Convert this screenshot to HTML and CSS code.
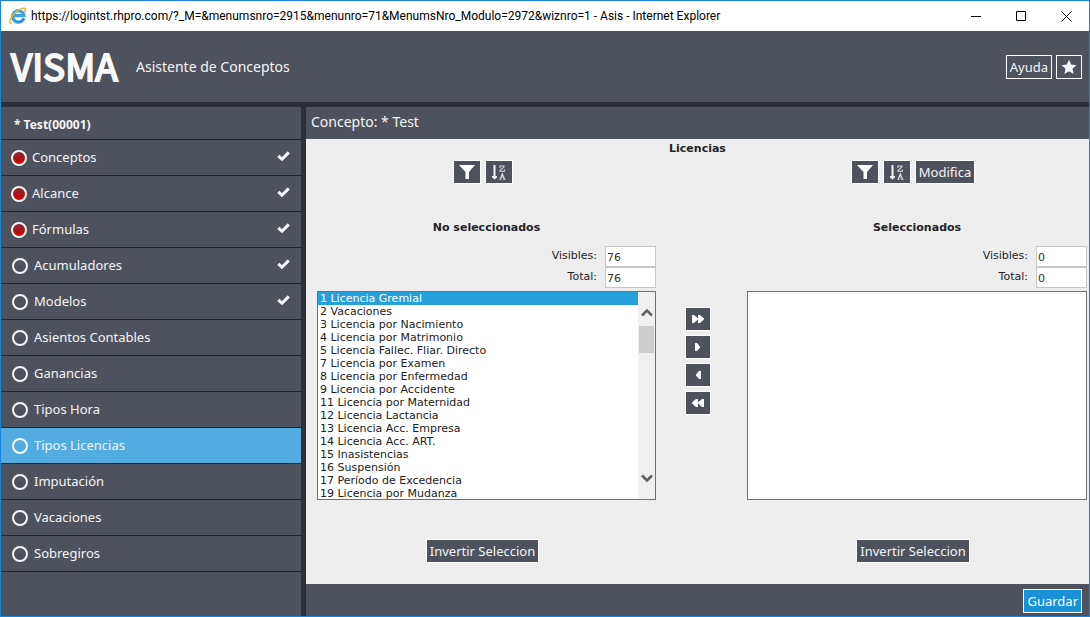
FILE: index.html
```html
<!DOCTYPE html>
<html lang="es">
<head>
<meta charset="utf-8">
<title>Asis - Internet Explorer</title>
<link rel="stylesheet" href="styles.css">
</head>
<body>
<svg class="defs" aria-hidden="true">
  <symbol id="check" viewBox="0 0 13 10"><path d="M1.3 4.8 5 8.2 11.8 1.4" fill="none" stroke="#f5f6fa" stroke-width="3"/></symbol>
  <symbol id="filter" viewBox="0 0 16 14"><path d="M0 0h16L10 7v7H6.500V7z" fill="#fff"/></symbol>
  <symbol id="sort" viewBox="0 0 14 15"><path d="M2.500 0v11" stroke="#f4f4f4" stroke-width="2"/><path d="M0 11h5v1.500L2.500 14.500 0 12.500z" fill="#f4f4f4"/><path d="M8 3V1h4v.8L8 5.400V6.200h4.300V4.500M7.500 14.200h2M11 14.200h2.500M8.300 14 10.300 8.800 12.500 14M9 12.300h3" fill="none" stroke="#dcdde0" stroke-width="1.100"/></symbol>
  <symbol id="next" viewBox="0 0 12 8"><path d="M3 0h2l3 3.500v1L5 8H3z" fill="#fff"/></symbol>
  <symbol id="last" viewBox="0 0 12 8"><path d="M0 0h2l4 3.500V0h2l4 3.500v1L8 8H6V4.500L2 8H0z" fill="#fff"/></symbol>
</svg>
<div class="window">
  <header class="titlebar">
    <svg class="ie" viewBox="0 0 18 18" aria-hidden="true">
      <path d="M14.800 11.200A5.700 5.700 0 1 1 15 8.600H5" fill="none" stroke="#3ba3e0" stroke-width="3.200"/>
      <path d="M14.800 11.200A5.700 5.700 0 0 1 5 12.600" fill="none" stroke="#1b7fca" stroke-width="1"/>
      <path d="M2.600 16.600C-1 16 1.500 9 7.500 4.500 11 1.500 16.200-.2 16.400 2.600c.1 1-.4 2-.9 2.800" fill="none" stroke="#f0b323" stroke-width="1.500"/>
    </svg>
    <span class="titletext">https://logintst.rhpro.com/?_M=&amp;menumsnro=2915&amp;menunro=71&amp;MenumsNro_Modulo=2972&amp;wiznro=1 - Asis - Internet Explorer</span>
    <button class="winbtn" aria-label="Minimizar"><svg viewBox="0 0 11 11"><path d="M0 5.500h10" stroke="#000"/></svg></button>
    <button class="winbtn" aria-label="Maximizar"><svg viewBox="0 0 11 11"><path d="M.5.5h9v9h-9z" fill="none" stroke="#000"/></svg></button>
    <button class="winbtn" aria-label="Cerrar"><svg viewBox="0 0 11 11"><path d="M.5.500l10 10M10.500.5l-10 10" stroke="#000"/></svg></button>
  </header>
  <div class="banner">
    <span class="logo">VISMA</span>
    <h1 class="apptitle">Asistente de Conceptos</h1>
    <button class="btn ghost">Ayuda</button>
    <button class="btn ghost star" aria-label="Favorito"><svg viewBox="0 0 16 16"><path d="M8 .8l2.200 4.800 5.200.6-3.900 3.500 1.100 5.200L8 12.300l-4.600 2.600 1.100-5.200L.6 6.200l5.200-.6z" fill="#f6f6f6"/></svg></button>
  </div>
  <div class="body">
    <nav class="sidebar">
      <h2 class="sidetitle">* Test(00001)</h2>
      <a class="item done" href="#"><i class="dot"></i><span>Conceptos</span><svg class="tick"><use href="#check"/></svg></a>
      <a class="item done" href="#"><i class="dot"></i><span>Alcance</span><svg class="tick"><use href="#check"/></svg></a>
      <a class="item done" href="#"><i class="dot"></i><span>Fórmulas</span><svg class="tick"><use href="#check"/></svg></a>
      <a class="item" href="#"><i class="dot"></i><span>Acumuladores</span><svg class="tick"><use href="#check"/></svg></a>
      <a class="item" href="#"><i class="dot"></i><span>Modelos</span><svg class="tick"><use href="#check"/></svg></a>
      <a class="item" href="#"><i class="dot"></i><span>Asientos Contables</span></a>
      <a class="item" href="#"><i class="dot"></i><span>Ganancias</span></a>
      <a class="item" href="#"><i class="dot"></i><span>Tipos Hora</span></a>
      <a class="item active" href="#"><i class="dot"></i><span>Tipos Licencias</span></a>
      <a class="item" href="#"><i class="dot"></i><span>Imputación</span></a>
      <a class="item" href="#"><i class="dot"></i><span>Vacaciones</span></a>
      <a class="item" href="#"><i class="dot"></i><span>Sobregiros</span></a>
    </nav>
    <main class="main">
      <h2 class="maintitle">Concepto: * Test</h2>
      <section class="content">
        <h3 class="heading">Licencias</h3>
        <div class="picker">
          <div class="side">
            <div class="tools">
              <button class="btn icon" aria-label="Filtrar"><svg class="i-filter"><use href="#filter"/></svg></button>
              <button class="btn icon" aria-label="Ordenar"><svg class="i-sort"><use href="#sort"/></svg></button>
            </div>
            <h3 class="heading">No seleccionados</h3>
            <div class="counts">
              <label for="v1">Visibles:</label><input id="v1" value="76">
              <label for="t1">Total:</label><input id="t1" value="76">
            </div>
            <div class="listbox">
              <select class="list" size="16" aria-label="No seleccionados">
                <option selected>1 Licencia Gremial</option>
                <option>2 Vacaciones</option>
                <option>3 Licencia por Nacimiento</option>
                <option>4 Licencia por Matrimonio</option>
                <option>5 Licencia Fallec. Fliar. Directo</option>
                <option>7 Licencia por Examen</option>
                <option>8 Licencia por Enfermedad</option>
                <option>9 Licencia por Accidente</option>
                <option>11 Licencia por Maternidad</option>
                <option>12 Licencia Lactancia</option>
                <option>13 Licencia Acc. Empresa</option>
                <option>14 Licencia Acc. ART.</option>
                <option>15 Inasistencias</option>
                <option>16 Suspensión</option>
                <option>17 Período de Excedencia</option>
                <option>19 Licencia por Mudanza</option>
              </select>
              <div class="scroll" aria-hidden="true">
                <svg class="arrow" viewBox="0 0 12 9"><path d="M1 7.500l5-5 5 5" fill="none" stroke="#606060" stroke-width="2.500"/></svg>
                <div class="thumb"></div>
                <svg class="arrow" viewBox="0 0 12 9"><path d="M1 1.500l5 5 5-5" fill="none" stroke="#606060" stroke-width="2.500"/></svg>
              </div>
            </div>
            <div class="foot"><button class="btn">Invertir Seleccion</button></div>
          </div>
          <div class="movers">
            <button class="btn move" aria-label="Agregar todos"><svg><use href="#last"/></svg></button>
            <button class="btn move" aria-label="Agregar"><svg><use href="#next"/></svg></button>
            <button class="btn move back" aria-label="Quitar"><svg><use href="#next"/></svg></button>
            <button class="btn move back" aria-label="Quitar todos"><svg><use href="#last"/></svg></button>
          </div>
          <div class="side">
            <div class="tools">
              <button class="btn icon" aria-label="Filtrar"><svg class="i-filter"><use href="#filter"/></svg></button>
              <button class="btn icon" aria-label="Ordenar"><svg class="i-sort"><use href="#sort"/></svg></button>
              <button class="btn">Modifica</button>
            </div>
            <h3 class="heading">Seleccionados</h3>
            <div class="counts">
              <label for="v2">Visibles:</label><input id="v2" value="0">
              <label for="t2">Total:</label><input id="t2" value="0">
            </div>
            <div class="listbox"><select class="list" size="16" aria-label="Seleccionados"></select></div>
            <div class="foot"><button class="btn">Invertir Seleccion</button></div>
          </div>
        </div>
      </section>
      <footer class="actions"><button class="btn primary">Guardar</button></footer>
    </main>
  </div>
</div>
</body>
</html>
```
FILE: styles.css
```css
* { box-sizing: border-box; }
body { margin: 0; font-family: "Noto Sans", "Open Sans", sans-serif; color: #222328; }
h1, h2, h3 { margin: 0; font-weight: 400; }
button, input, select { font: inherit; margin: 0; }
svg { display: block; flex: none; }
.defs { display: none; }

.window { min-height: 100vh; display: flex; flex-direction: column; border: 1px solid #1883d7; background: #4e525d; }

.titlebar { display: flex; align-items: center; height: 30px; padding-left: 8px; background: #fff; color: #000; font-family: Roboto, sans-serif; font-size: 12px; }
.ie { width: 18px; height: 18px; margin-right: 4px; }
.titletext { flex: 1; white-space: nowrap; }
.winbtn { width: 45px; height: 28px; padding: 0; border: 0; background: none; display: grid; place-items: center; }
.winbtn svg { width: 11px; height: 11px; }

.banner { display: flex; align-items: center; height: 76px; padding: 0 7px 0 10px; border-bottom: 5px solid #2b2e36; color: #f5f5f5; }
.logo { width: 125px; padding-bottom: 3px; font-family: "Noto Sans CJK JP", sans-serif; font-weight: 400; font-size: 37px; line-height: 40px; color: #f8f8f8; -webkit-text-stroke: 2px #f8f8f8; }
.apptitle { flex: 1; font-size: 14px; }

.btn { height: 24px; padding: 0 3px; border: 1px solid #fff; background: #4e525d; color: #f5f5f5; font-family: "Noto Sans", "Open Sans", sans-serif; font-size: 13px; line-height: 18px; white-space: nowrap; display: grid; place-items: center; }
.ghost { margin-left: 4px; }
.star { width: 26px; padding: 0; }
.star svg { width: 16px; height: 16px; }

.body { flex: 1; display: flex; }
.sidebar { width: 305px; border-right: 5px solid #2b2f36; color: #f5f5f5; font-size: 13px; }
.sidetitle { height: 33px; padding: 2px 13px 0; border-bottom: 1px solid #23252b; font-size: 12px; font-weight: 700; line-height: 31px; }
.item { display: flex; align-items: center; height: 36px; padding: 0 11px; border-bottom: 1px solid #23252b; color: inherit; text-decoration: none; }
.item span { flex: 1; padding-bottom: 2px; }
.dot { width: 16px; height: 16px; margin: 1px 6px 0 0; border: 2px solid #f5f5f5; border-radius: 50%; background: linear-gradient(#50555f, #4b4f59); }
.done { padding-left: 10px; }
.done .dot { margin-right: 5px; background: linear-gradient(#80282c, #d40000); }
.item.done { padding-right: 11px; }
.active { background: #52ace0; }
.active .dot { background: none; }
.tick { width: 13px; height: 10px; margin-bottom: 3px; }

.main { flex: 1; display: flex; flex-direction: column; }
.maintitle { height: 32px; padding-left: 5px; font-size: 14px; line-height: 30px; color: #f5f5f5; }
.content { flex: 1; background: #eee; padding-top: 1px; font-family: "DejaVu Sans", sans-serif; font-size: 11px; }
.heading { font-size: 11px; font-weight: 700; line-height: 18px; text-align: center; }
.picker { display: grid; grid-template-columns: 339fr 91px 340fr; padding: 2px 2px 0 11px; }
.tools, .foot { display: flex; justify-content: center; gap: 4px; padding-right: 8px; }
.tools { margin-bottom: 35px; }
.icon { width: 28px; padding: 0; }
.i-filter { width: 16px; height: 14px; }
.i-sort { width: 14px; height: 15px; }
.counts { display: grid; grid-template-columns: 1fr 51px; column-gap: 8px; margin: 9px 0 3px; text-align: right; }
.counts label { line-height: 20px; }
.counts input { width: 51px; height: 21px; padding: 1px 0 0 1px; border: 1px solid #c8c8c8; background: #fff; color: #333; }
.listbox { display: flex; height: 209px; border: 1px solid #707070; background: #fff; }
.list { flex: 1; min-width: 0; height: 207px; padding: 0; border: 0; border-radius: 0; outline: 0; overflow: hidden; background: #fff; color: #222; }
.list option { height: 13px; min-height: 13px; padding: 0 2px; line-height: 13px; }
.list option:checked { background: #26a0da linear-gradient(#26a0da, #26a0da); color: #fff; }
.scroll { width: 17px; padding: 16px 0 16px; display: flex; flex-direction: column; align-items: center; background: #f0f0f0; }
.arrow { width: 12px; height: 9px; }
.thumb { width: 15px; height: 27px; margin: 9px 0 auto; background: #cdcdcd; }
.foot { margin-top: 39px; }
.movers { display: flex; flex-direction: column; align-items: center; gap: 4px; padding: 147px 7px 0 0; }
.move { width: 26px; padding: 0; }
.move svg { width: 12px; height: 8px; }
.back svg { transform: scaleX(-1); }

.actions { display: flex; justify-content: flex-end; align-items: center; height: 32px; padding: 2px 7px 0 0; }
.primary { background: #1992d8; color: #fff; }
```
